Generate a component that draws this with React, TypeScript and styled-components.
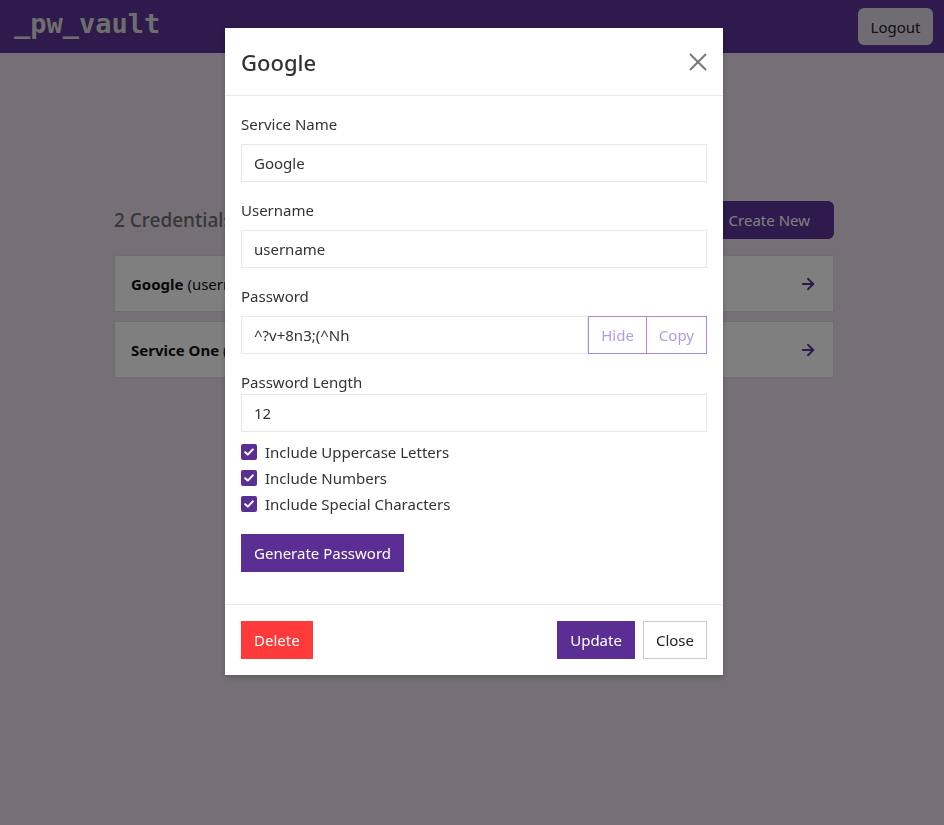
import React from 'react'
import styled, { createGlobalStyle } from 'styled-components'
import { ArrowRight } from 'lucide-react'

const GlobalStyle = createGlobalStyle`
  html, body {
    margin: 0;
    padding: 0;
    background: #eae0ea;
    font-family: "Noto Sans", "Open Sans", sans-serif;
    color: #333;
  }
  * { box-sizing: border-box; }
`

const Navbar = styled.header`
  height: 53px;
  background: #5c3499;
  display: flex;
  align-items: center;
  justify-content: space-between;
  padding: 0 11px 0 14px;
`

const Logo = styled.div`
  font-family: "DejaVu Sans Mono", "Liberation Mono", monospace;
  font-weight: bold;
  font-size: 27px;
  color: #dcdcdc;
  margin-top: -7px;
`

const LogoutButton = styled.button`
  height: 37px;
  width: 75px;
  border: none;
  border-radius: 6px;
  background: #e0d8e8;
  color: #222;
  font-family: inherit;
  font-size: 15px;
`

const Content = styled.div`
  padding-left: 4px;
`

const Main = styled.main`
  width: 720px;
  margin: 148px auto 0;
`

const ListHeader = styled.div`
  display: flex;
  align-items: center;
  justify-content: space-between;
  margin-bottom: 16px;
`

const ListTitle = styled.h2`
  margin: 0;
  font-size: 19px;
  font-weight: 500;
  color: #6e6e6e;
`

const CreateButton = styled.button`
  height: 38px;
  padding: 0 24px 0 12px;
  border: none;
  border-radius: 6px;
  background: #5c3499;
  color: #fff;
  font-family: inherit;
  font-size: 15px;
`

const Card = styled.div`
  height: 57px;
  margin-bottom: 9px;
  padding: 0 16px;
  background: #fff;
  border: 1px solid #ddd;
  display: flex;
  align-items: center;
  justify-content: space-between;
  font-size: 15px;
  color: #111;

  b { font-weight: 700; }
  svg { color: #5c3499; }
`

const Overlay = styled.div`
  position: fixed;
  inset: 0;
  background: rgba(0, 0, 0, 0.5);
  display: flex;
  justify-content: center;
  align-items: flex-start;
  padding: 28px 0 0 4px;
`

const Modal = styled.div`
  width: 498px;
  background: #fff;
  box-shadow: 0 2px 6px rgba(0, 0, 0, 0.2);
`

const ModalHeader = styled.div`
  height: 68px;
  padding: 0 14px 0 16px;
  border-bottom: 1px solid #e9e9e9;
  display: flex;
  align-items: center;
  justify-content: space-between;
`

const ModalTitle = styled.h3`
  margin: 0;
  font-size: 22px;
  font-weight: 500;
  color: #333;
`

const CloseIcon = styled.button`
  border: none;
  background: none;
  padding: 0;
  width: 22px;
  height: 22px;
  display: flex;
  align-items: center;
  justify-content: center;
  color: #777;
`

const ModalBody = styled.div`
  padding: 17px 16px 32px;
`

const Field = styled.div`
  margin-bottom: 17px;
`

const Label = styled.label<{ tight?: boolean }>`
  display: block;
  font-size: 15px;
  line-height: 22px;
  color: #333;
  margin-bottom: ${p => (p.tight ? '1px' : '9px')};
`

const Input = styled.input`
  width: 100%;
  height: 38px;
  padding: 0 12px;
  border: 1px solid #e8e8e8;
  font-family: inherit;
  font-size: 15px;
  color: #333;
  outline: none;
  flex: 1;
`

const InputGroup = styled.div`
  display: flex;
`

const GroupButton = styled.button`
  height: 38px;
  padding: 0 12px;
  border: 1px solid #a98bd8;
  background: #fff;
  color: #b49cdc;
  font-family: inherit;
  font-size: 15px;
  & + & { border-left: none; }
`

const CheckList = styled.div`
  margin-top: -10px;
`

const CheckRow = styled.label`
  display: flex;
  align-items: center;
  gap: 8px;
  height: 26px;
  font-size: 15px;
  color: #333;
`

const CheckBox = styled.span`
  width: 16px;
  height: 16px;
  border-radius: 2px;
  background: #5a2e92;
  display: flex;
  align-items: center;
  justify-content: center;
`

const Button = styled.button<{ variant: 'primary' | 'danger' | 'plain' }>`
  height: 38px;
  padding: 0 12px;
  font-family: inherit;
  font-size: 15px;
  border: 1px solid ${p => (p.variant === 'plain' ? '#ccc' : 'transparent')};
  background: ${p => (p.variant === 'primary' ? '#5a2e92' : p.variant === 'danger' ? '#ff3a3a' : '#fff')};
  color: ${p => (p.variant === 'plain' ? '#222' : '#fff')};
`

const GenerateRow = styled.div`
  margin-top: 17px;
`

const ModalFooter = styled.div`
  border-top: 1px solid #e9e9e9;
  padding: 16px;
  display: flex;
  align-items: center;
  gap: 8px;

  & > :first-child { margin-right: auto; }
`

const options = ['Include Uppercase Letters', 'Include Numbers', 'Include Special Characters']

const Check = () => (
  <svg width="10" height="8" viewBox="0 0 10 8">
    <path d="M1.2 4.2 L3.8 6.6 L8.8 1.4" fill="none" stroke="#fff" strokeWidth="2" strokeLinecap="round" strokeLinejoin="round" />
  </svg>
)

const App: React.FC = () => {
  return (
    <>
      <GlobalStyle />
      <Navbar>
        <Logo>_pw_vault</Logo>
        <LogoutButton>Logout</LogoutButton>
      </Navbar>
      <Content>
        <Main>
          <ListHeader>
            <ListTitle>2 Credentials</ListTitle>
            <CreateButton>Create New</CreateButton>
          </ListHeader>
          <Card>
            <span><b>Google</b> (username)</span>
            <ArrowRight size={18} strokeWidth={2.5} />
          </Card>
          <Card>
            <span><b>Service One</b> (user)</span>
            <ArrowRight size={18} strokeWidth={2.5} />
          </Card>
        </Main>
      </Content>

      <Overlay>
        <Modal>
          <ModalHeader>
            <ModalTitle>Google</ModalTitle>
            <CloseIcon>
              <svg width="18" height="18" viewBox="0 0 18 18">
                <path d="M1 1 L17 17 M17 1 L1 17" stroke="currentColor" strokeWidth="2" />
              </svg>
            </CloseIcon>
          </ModalHeader>
          <ModalBody>
            <Field>
              <Label>Service Name</Label>
              <Input defaultValue="Google" />
            </Field>
            <Field>
              <Label>Username</Label>
              <Input defaultValue="username" />
            </Field>
            <Field>
              <Label>Password</Label>
              <InputGroup>
                <Input defaultValue="^?v+8n3;(^Nh" />
                <GroupButton>Hide</GroupButton>
                <GroupButton>Copy</GroupButton>
              </InputGroup>
            </Field>
            <Field>
              <Label tight>Password Length</Label>
              <Input defaultValue="12" />
            </Field>
            <CheckList>
              {options.map(o => (
                <CheckRow key={o}>
                  <CheckBox><Check /></CheckBox>
                  {o}
                </CheckRow>
              ))}
            </CheckList>
            <GenerateRow>
              <Button variant="primary">Generate Password</Button>
            </GenerateRow>
          </ModalBody>
          <ModalFooter>
            <Button variant="danger">Delete</Button>
            <Button variant="primary">Update</Button>
            <Button variant="plain">Close</Button>
          </ModalFooter>
        </Modal>
      </Overlay>
    </>
  )
}

export default App
